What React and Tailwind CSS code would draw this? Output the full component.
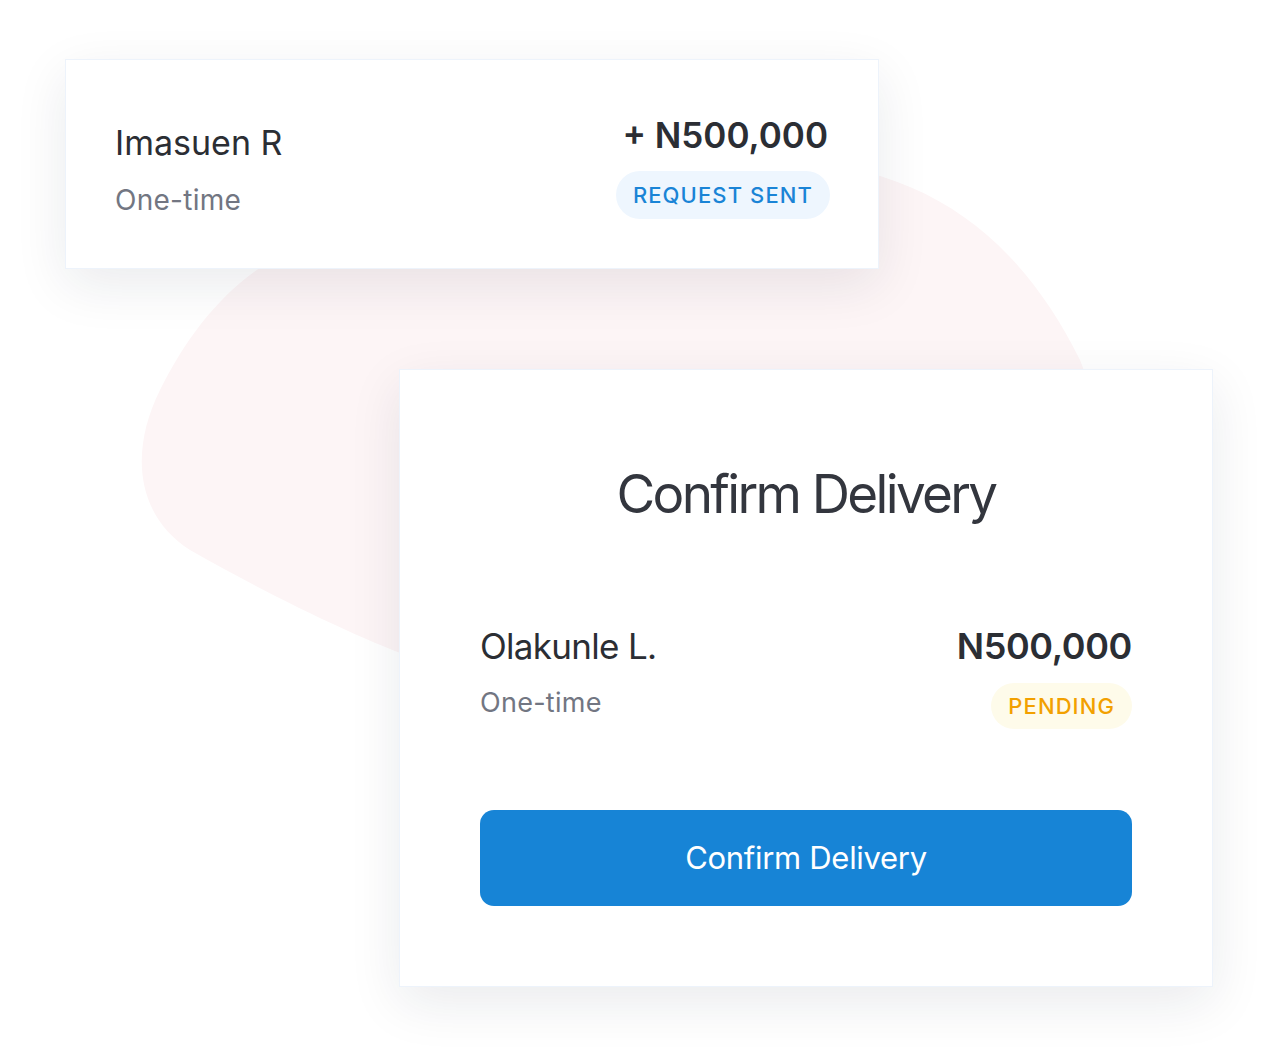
export default function App() {
  const font = { fontFamily: 'Inter, "Noto Sans", sans-serif' };
  return (
    <div className="relative w-[1278px] h-[1058px] bg-white overflow-hidden" style={font}>
      <svg className="absolute left-0 top-0" width="1278" height="1058" viewBox="0 0 1278 1058">
        <path
          d="M 290 250 C 420 190 600 160 780 160 C 930 165 1020 240 1080 360 C 1110 430 1080 560 1000 640 L 420 660 C 360 640 260 590 190 550 C 135 515 130 450 160 390 C 190 330 230 280 290 250 Z"
          fill="#fdf5f6"
        />
      </svg>
      <div className="relative flex flex-col">
        <div className="ml-[65px] mt-[59px] w-[814px] h-[210px] bg-white border border-[#edf3fb] shadow-[0_16px_50px_rgba(20,30,50,0.09)] flex items-start justify-between pl-[49px] pr-[48px] pt-[56px]">
          <div className="flex flex-col mt-[7px]">
            <div className="text-[34px] leading-[40px] text-[#2b2e34] tracking-[0em]">Imasuen R</div>
            <div className="mt-[21px] text-[28px] leading-[32px] text-[#727682] tracking-[0.01em]">One-time</div>
          </div>
          <div className="flex flex-col items-end -mt-[2px]">
            <div className="text-[35px] leading-[42px] font-semibold text-[#2b2e34] tracking-[0em] pr-[2px]">+ N500,000</div>
            <div className="mt-[15px] h-[48px] px-[17px] rounded-full bg-[#eef6fe] flex items-center text-[22px] font-medium text-[#1a84d6] tracking-[0.05em]">REQUEST SENT</div>
          </div>
        </div>
        <div className="ml-[399px] mt-[100px] w-[814px] h-[618px] bg-white border border-[#edf3fb] shadow-[0_16px_50px_rgba(20,30,50,0.09)] flex flex-col px-[80px] pt-[92px]">
          <div className="text-center text-[53px] leading-[64px] text-[#33363e] tracking-[-0.05em]">Confirm Delivery</div>
          <div className="mt-[99px] flex items-start justify-between">
            <div className="flex flex-col">
              <div className="text-[35px] leading-[42px] text-[#2b2e34] tracking-[-0.02em]">Olakunle L.</div>
              <div className="mt-[20px] text-[27px] leading-[32px] text-[#727682] tracking-[0.01em]">One-time</div>
            </div>
            <div className="flex flex-col items-end">
              <div className="text-[36px] leading-[42px] font-semibold text-[#2b2e34] tracking-[-0.01em]">N500,000</div>
              <div className="mt-[16px] h-[46px] px-[17px] rounded-full bg-[#fefbea] flex items-center text-[22px] font-medium text-[#f2a000] tracking-[0.05em]">PENDING</div>
            </div>
          </div>
          <button className="mt-[81px] h-[96px] w-full rounded-[14px] bg-[#1784d6] text-white text-[31px] tracking-[-0.01em] flex items-center justify-center">
            Confirm Delivery
          </button>
        </div>
      </div>
    </div>
  );
}
